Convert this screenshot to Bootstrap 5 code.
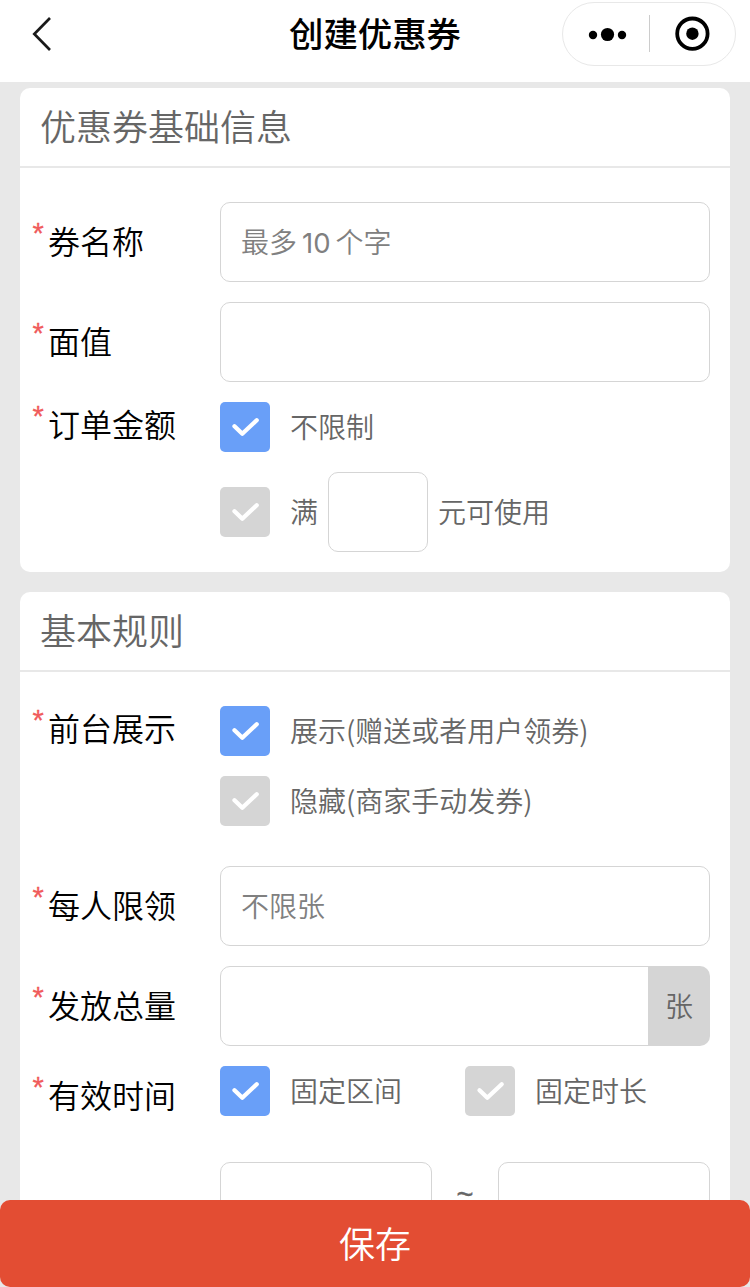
<!DOCTYPE html>
<html lang="zh-CN">
<head>
<meta charset="utf-8">
<meta name="viewport" content="width=device-width, initial-scale=1">
<title>创建优惠券</title>
<link href="https://cdn.jsdelivr.net/npm/bootstrap@5.3.0/dist/css/bootstrap.min.css" rel="stylesheet">
<style>
  html, body { height: 100%; overflow: hidden; }
  body { background: #e8e8e8; color: #666; font-family: "Noto Sans CJK SC", sans-serif; font-size: 28px; font-weight: 350; line-height: 40px; }
  .topbar { height: 82px; padding-bottom: 14px; color: #000; }
  .topbar h1 { font-size: 34.4px; font-weight: 500; line-height: 50px; padding-bottom: 4px; }
  .side { width: 188px; }
  .capsule { width: 174px; height: 64px; border: 1px solid #e8e8e8; border-radius: 32px; }
  .sections { gap: 20px; padding: 6px 20px 0; }
  .panel { border: 0; border-radius: 10px; }
  .panel .card-header { height: 80px; padding: 0 20px; background: none; border-bottom: 2px solid #e8e8e8; font-size: 36px; line-height: 75px; }
  .panel .card-body { padding: 34px 20px 20px 12px; display: grid; row-gap: 20px; }
  .field { display: grid; grid-template-columns: 188px 1fr; align-items: start; }
  .field-spaced { margin-bottom: 20px; }
  .field-name { display: flex; color: #000; font-size: 32px; line-height: 76px; }
  .field-name::before { content: "*"; width: 16px; padding-left: .5px; color: #f05b5b; font-family: "Liberation Sans", sans-serif; font-size: 29px; font-weight: 400; -webkit-text-stroke: .3px #f05b5b; margin-top: -7px; margin-bottom: 7px; }
  .name-48 { line-height: 42px; }
  .name-60 { line-height: 56px; }
  .field .form-control { height: 80px; border: 1px solid #d5d5d5; border-radius: 10px; padding: 0 20px 2px; font-size: 28px; font-weight: 350; line-height: 76px; color: #808080; box-shadow: none; }
  .field .form-control::placeholder { color: #808080; opacity: 1; }
  .num { font-family: Inter, sans-serif; font-weight: 400; font-size: 27.5px; margin: 0 5px; }
  .tick { width: 50px; height: 50px; border-radius: 5px; background: #d5d5d5; flex: none; }
  .tick.on { background: #699ff8; }
  .options { gap: 20px; }
  .option { display: flex; align-items: center; gap: 20px; }
  .option span { padding-bottom: 2px; }
  .field .amount { width: 100px; margin: 0 10px; }
  .field .input-group-text { width: 62px; padding: 0 0 2px; background: #d5d5d5; border: 0; border-radius: 10px; color: #666; font-size: 28px; font-weight: 350; }
  .dates { display: grid; grid-template-columns: 212px 66px 212px; margin-top: 46px; line-height: 64px; }
  .dates span { font-family: "Liberation Sans", sans-serif; font-size: 29px; font-weight: 400; -webkit-text-stroke: .4px #666; }
  .save { height: 87px; border: 0; border-radius: 10px; background: #e34d33; color: #fff; font-size: 36px; font-weight: 350; line-height: 84px; padding: 0 0 3px; }
</style>
</head>
<body>
<svg class="d-none" xmlns="http://www.w3.org/2000/svg">
  <symbol id="check" viewBox="0 0 50 50"><path d="M14.5 24.2 22.3 31.8 36.7 18.2" fill="none" stroke="#fff" stroke-width="4.3" stroke-linecap="round" stroke-linejoin="round"/></symbol>
</svg>

<header class="topbar bg-white d-flex align-items-center justify-content-between">
  <div class="side">
    <svg class="d-block" width="80" height="68" viewBox="0 0 80 68"><path d="M50 18 34.3 34 50 50" fill="none" stroke="#1a1a1a" stroke-width="2.7"/></svg>
  </div>
  <h1 class="m-0">创建优惠券</h1>
  <div class="side">
    <div class="capsule">
      <svg class="d-block" width="172" height="62" viewBox="0 0 172 62">
        <circle cx="30" cy="32" r="4.2"/><circle cx="44.5" cy="31.5" r="6.6"/><circle cx="59" cy="32" r="4.2"/>
        <path d="M86.5 12V49" stroke="#ccc"/>
        <circle cx="129.4" cy="30.7" r="15.2" fill="none" stroke="#000" stroke-width="3.8"/><circle cx="129.4" cy="30.7" r="6.2"/>
      </svg>
    </div>
  </div>
</header>

<main class="sections d-grid">
  <section class="card panel">
    <div class="card-header">优惠券基础信息</div>
    <div class="card-body">
      <div class="field">
        <div class="field-name">券名称</div>
        <div class="form-control">最多<span class="num">10</span>个字</div>
      </div>
      <div class="field">
        <div class="field-name">面值</div>
        <input class="form-control" type="text">
      </div>
      <div class="field">
        <div class="field-name name-48">订单金额</div>
        <div class="options d-grid">
          <div class="option"><svg class="tick on"><use href="#check"/></svg><span>不限制</span></div>
          <div class="option"><svg class="tick"><use href="#check"/></svg>
            <div class="d-flex align-items-center"><span>满</span><input class="form-control amount" type="text"><span>元可使用</span></div>
          </div>
        </div>
      </div>
    </div>
  </section>

  <section class="card panel">
    <div class="card-header">基本规则</div>
    <div class="card-body">
      <div class="field field-spaced">
        <div class="field-name name-48">前台展示</div>
        <div class="options d-grid">
          <div class="option"><svg class="tick on"><use href="#check"/></svg><span>展示(赠送或者用户领券)</span></div>
          <div class="option"><svg class="tick"><use href="#check"/></svg><span>隐藏(商家手动发券)</span></div>
        </div>
      </div>
      <div class="field">
        <div class="field-name">每人限领</div>
        <input class="form-control" type="text" placeholder="不限张">
      </div>
      <div class="field">
        <div class="field-name">发放总量</div>
        <div class="input-group flex-nowrap">
          <input class="form-control" type="text">
          <span class="input-group-text justify-content-center">张</span>
        </div>
      </div>
      <div class="field">
        <div class="field-name name-60">有效时间</div>
        <div>
          <div class="row g-0">
            <div class="col-6 option"><svg class="tick on"><use href="#check"/></svg><span>固定区间</span></div>
            <div class="col-6 option"><svg class="tick"><use href="#check"/></svg><span>固定时长</span></div>
          </div>
          <div class="dates">
            <input class="form-control" type="text"><span class="text-center">~</span><input class="form-control" type="text">
          </div>
        </div>
      </div>
    </div>
  </section>
</main>

<button class="btn save fixed-bottom w-100" type="button">保存</button>
<script src="https://cdn.jsdelivr.net/npm/bootstrap@5.3.0/dist/js/bootstrap.bundle.min.js"></script>
</body>
</html>
